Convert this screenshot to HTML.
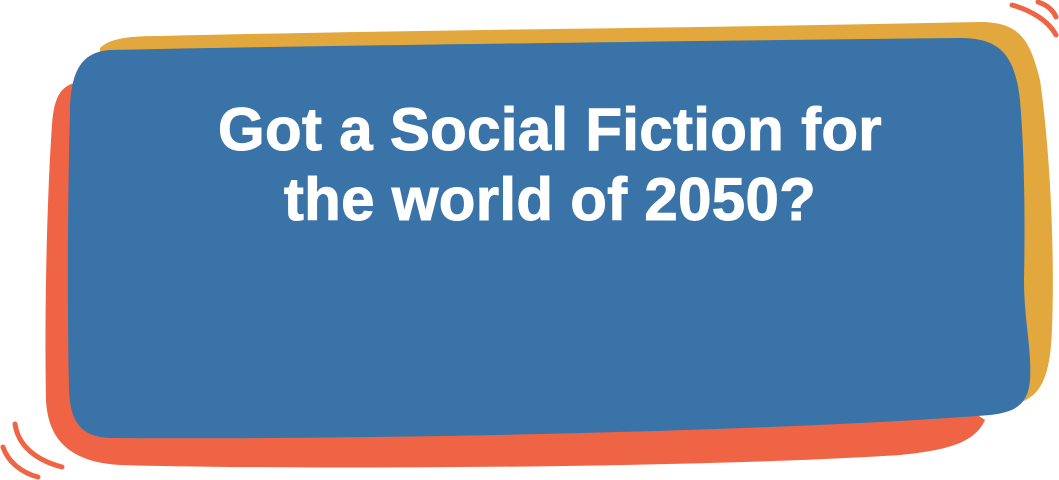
<!DOCTYPE html>
<html><head><style>
html,body{margin:0;padding:0;background:#fff;width:1059px;height:480px;overflow:hidden}
svg{position:absolute;left:0;top:0}
.t{position:absolute;left:0;width:1100px;text-align:center;color:#fff;font-family:"Liberation Sans",sans-serif;font-weight:bold;font-size:60px;line-height:70px;top:95px;letter-spacing:0.3px;-webkit-text-stroke:1px #fff}
</style></head><body>
<svg width="1059" height="480" viewBox="0 0 1059 480">
<path d="M100,48 C110,38 130,36 160,36 C400,30 700,28 980,22 C1020,22 1030,40 1040,80 C1050,150 1055,250 1052,330 C1050,380 1040,400 1010,405 L300,420 L100,100 Z" fill="#e2a83e"/>
<path d="M80,82 C100,80 300,90 500,100 L985,420 C975,442 950,450 900,455 C700,468 300,470 120,465 C70,462 48,440 46,400 C44,300 48,180 52,125 C54,95 62,84 80,82 Z" fill="#f06446"/>
<path d="M110,50 C300,46 600,42 960,38 C1000,38 1015,55 1020,100 C1025,160 1025,230 1024,280 C1024,320 1032,350 1030,380 C1028,405 1015,412 990,415 C800,430 400,440 110,438 C80,437 70,420 69,390 C67,300 68,180 70,110 C71,70 82,52 110,50 Z" fill="#3a73a8"/>
<g fill="none" stroke="#f06446" stroke-width="5" stroke-linecap="round">
<path d="M1012,5 C1030,10 1048,20 1056,35"/>
<path d="M1038,2 C1047,5 1053,10 1056,17"/>
<path d="M15,424 C18,445 35,460 62,467"/>
<path d="M3,447 C8,462 22,473 38,477"/>
</g>
</svg>
<div class="t">Got a Social Fiction for<br>the world of 2050?</div>
</body></html>
